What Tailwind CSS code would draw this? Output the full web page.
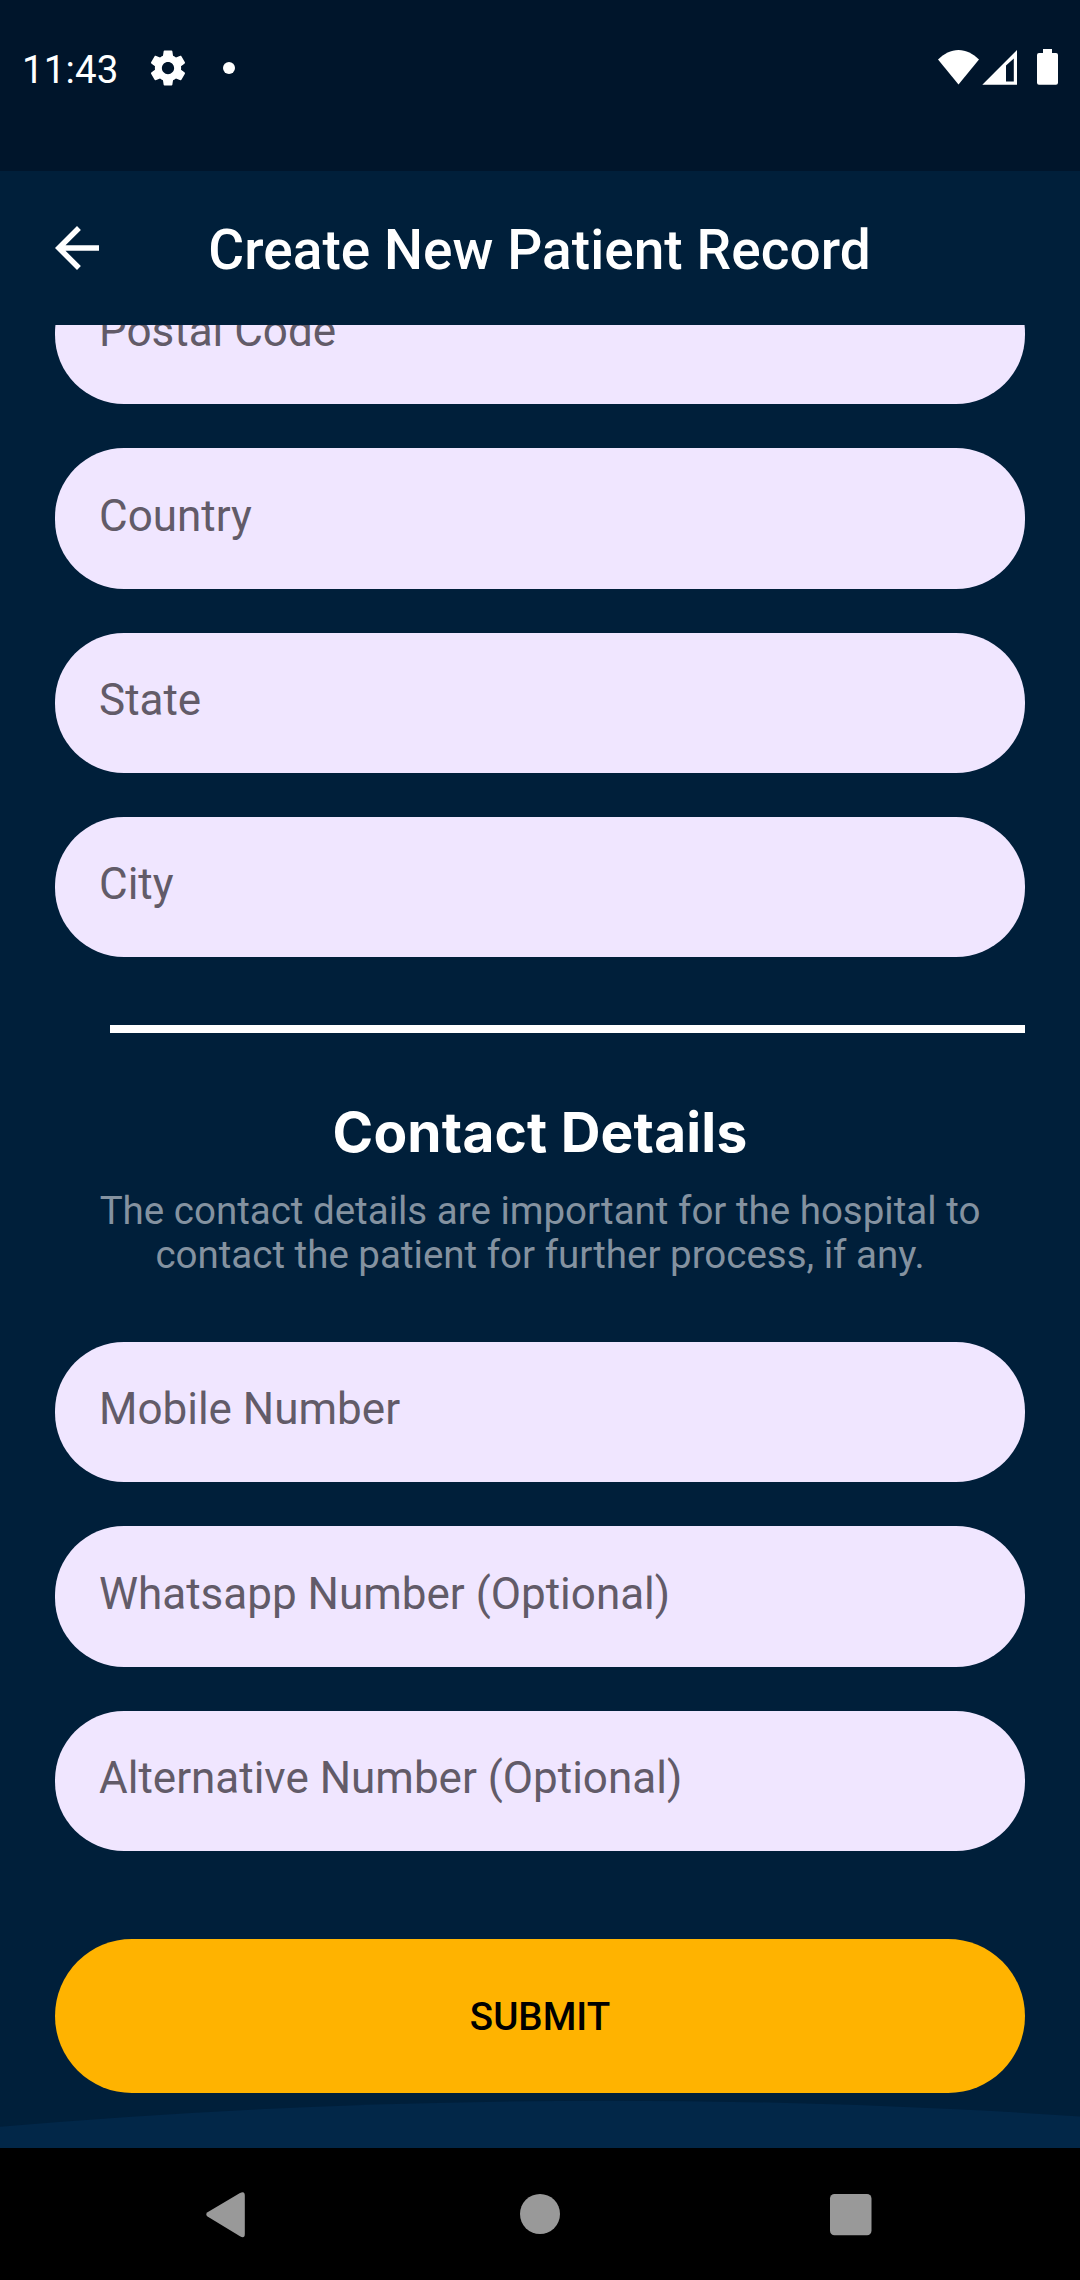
<!DOCTYPE html>
<html lang="en">
<head>
<meta charset="utf-8">
<title>Create New Patient Record</title>
<script src="https://cdn.jsdelivr.net/npm/@tailwindcss/browser@4"></script>
</head>
<body class="bg-black">
<div class="flex h-[2280px] w-[1080px] flex-col overflow-hidden bg-[#001f3a] font-[Roboto,sans-serif] text-white">

  <!-- Status bar -->
  <div class="flex h-[171px] shrink-0 items-start justify-between bg-[#00152b] pt-[45px] pr-[22px] pl-[22px]">
    <div class="flex h-[45px] items-center">
      <span class="w-[125px] pt-[3px] text-[38.5px] leading-[45px] tracking-[0.1px]">11:43</span>
      <svg class="h-[42px] w-[42px]" viewBox="0 0 24 24" fill="#fff"><path d="M19.43 12.98c.04-.32.07-.64.07-.98s-.03-.66-.07-.98l2.11-1.65c.19-.15.24-.42.12-.64l-2-3.46c-.12-.22-.39-.3-.61-.22l-2.49 1c-.52-.4-1.08-.73-1.69-.98l-.38-2.65C14.46 2.18 14.25 2 14 2h-4c-.25 0-.46.18-.49.42l-.38 2.65c-.61.25-1.17.59-1.69.98l-2.49-1c-.23-.09-.49 0-.61.22l-2 3.46c-.13.22-.07.49.12.64l2.11 1.65c-.04.32-.07.65-.07.98s.03.66.07.98l-2.11 1.65c-.19.15-.24.42-.12.64l2 3.46c.12.22.39.3.61.22l2.49-1c.52.4 1.08.73 1.69.98l.38 2.65c.03.24.24.42.49.42h4c.25 0 .46-.18.49-.42l.38-2.65c.61-.25 1.17-.59 1.69-.98l2.49 1c.23.09.49 0 .61-.22l2-3.46c.12-.22.07-.49-.12-.64l-2.11-1.65zM12 15.5c-1.93 0-3.5-1.57-3.5-3.5s1.57-3.5 3.5-3.5 3.5 1.57 3.5 3.5-1.57 3.5-3.5 3.5z"/></svg>
      <span class="ml-[34px] h-3 w-3 rounded-full bg-white"></span>
    </div>
    <svg class="h-[45px] w-[120px]" viewBox="938 45 120 45" fill="#fff">
      <path d="M938 59.6C944 53.6 951 50 958.5 50S973 53.6 979 59.6L958.5 84.5Z"/>
      <path fill-rule="evenodd" d="M1017 50V84.8H982.3ZM1006 65.5V81.5H1013.8V58.5Z"/>
      <path d="M1043 49h9v4h4q2 0 2 2v27.7q0 2-2 2h-17q-2 0-2-2V55q0-2 2-2h4Z"/>
    </svg>
  </div>

  <!-- App bar -->
  <div class="grid h-[154px] shrink-0 grid-cols-[110px_1fr_110px] items-center">
    <svg class="ml-[44px] h-[66px] w-[66px]" viewBox="0 0 24 24" fill="#fff"><path d="M20 11H7.83l5.59-5.59L12 4l-8 8 8 8 1.41-1.41L7.83 13H20v-2z"/></svg>
    <h1 class="pt-[4px] pr-[1px] text-center text-[55px] leading-[64px] font-medium tracking-[0.05px] whitespace-nowrap">Create New Patient Record</h1>
  </div>

  <!-- Scrolled form -->
  <div class="relative h-[1823px] shrink-0 overflow-hidden">
    <svg class="absolute bottom-0 left-0 h-[60px] w-[1080px]" viewBox="0 2088 1080 60" fill="#022748"><circle cx="608" cy="9210.7" r="7110"/></svg>
    <div class="relative -mt-[61px] flex flex-col px-[55px]">
      <div class="flex flex-col gap-[44.2px] text-[44px] text-[#625b68]">
        <div class="flex h-[140.2px] items-center rounded-[69px] bg-[#f0e6ff] px-[44px] pb-[5.6px]">Postal Code</div>
        <div class="flex h-[140.2px] items-center rounded-[69px] bg-[#f0e6ff] px-[44px] pb-[5.6px]">Country</div>
        <div class="flex h-[140.2px] items-center rounded-[69px] bg-[#f0e6ff] px-[44px] pb-[5.6px]">State</div>
        <div class="flex h-[140.2px] items-center rounded-[69px] bg-[#f0e6ff] px-[44px] pb-[5.6px]">City</div>
      </div>
      <div class="mt-[67.6px] ml-[55px] h-[8px] bg-white"></div>
      <h2 class="mt-[66.5px] text-center font-[Inter,sans-serif] text-[55px] leading-[67px] font-bold tracking-[0.2px]">Contact Details</h2>
      <p class="mt-[23px] text-center text-[38.5px] leading-[44px] text-[#8492a0]">The contact details are important for the hospital to<br>contact the patient for further process, if any.</p>
      <div class="mt-[64.6px] flex flex-col gap-[44.2px] text-[44px] text-[#625b68]">
        <div class="flex h-[140.2px] items-center rounded-[69px] bg-[#f0e6ff] px-[44px] pb-[5.6px]">Mobile Number</div>
        <div class="flex h-[140.2px] items-center rounded-[69px] bg-[#f0e6ff] px-[44px] pb-[5.6px]">Whatsapp Number (Optional)</div>
        <div class="flex h-[140.2px] items-center rounded-[69px] bg-[#f0e6ff] px-[44px] pb-[5.6px]">Alternative Number (Optional)</div>
      </div>
      <button class="mt-[88px] h-[154px] rounded-full bg-[#ffb300] pt-[2px] text-[38.5px] font-medium text-black">SUBMIT</button>
    </div>
  </div>

  <!-- System navigation -->
  <div class="h-[132px] shrink-0 bg-black">
    <svg class="h-[132px] w-[1080px]" viewBox="0 2148 1080 132" fill="#999">
      <path d="M207.5 2212.3 240 2193Q244.8 2190.5 244.8 2195.5V2234Q244.8 2239 240 2236.3L207.5 2216.5Q205 2214.4 207.5 2212.3Z"/>
      <circle cx="540" cy="2214" r="20"/>
      <rect x="830" y="2194" width="41.5" height="41.2" rx="4.5"/>
    </svg>
  </div>
</div>
</body>
</html>
